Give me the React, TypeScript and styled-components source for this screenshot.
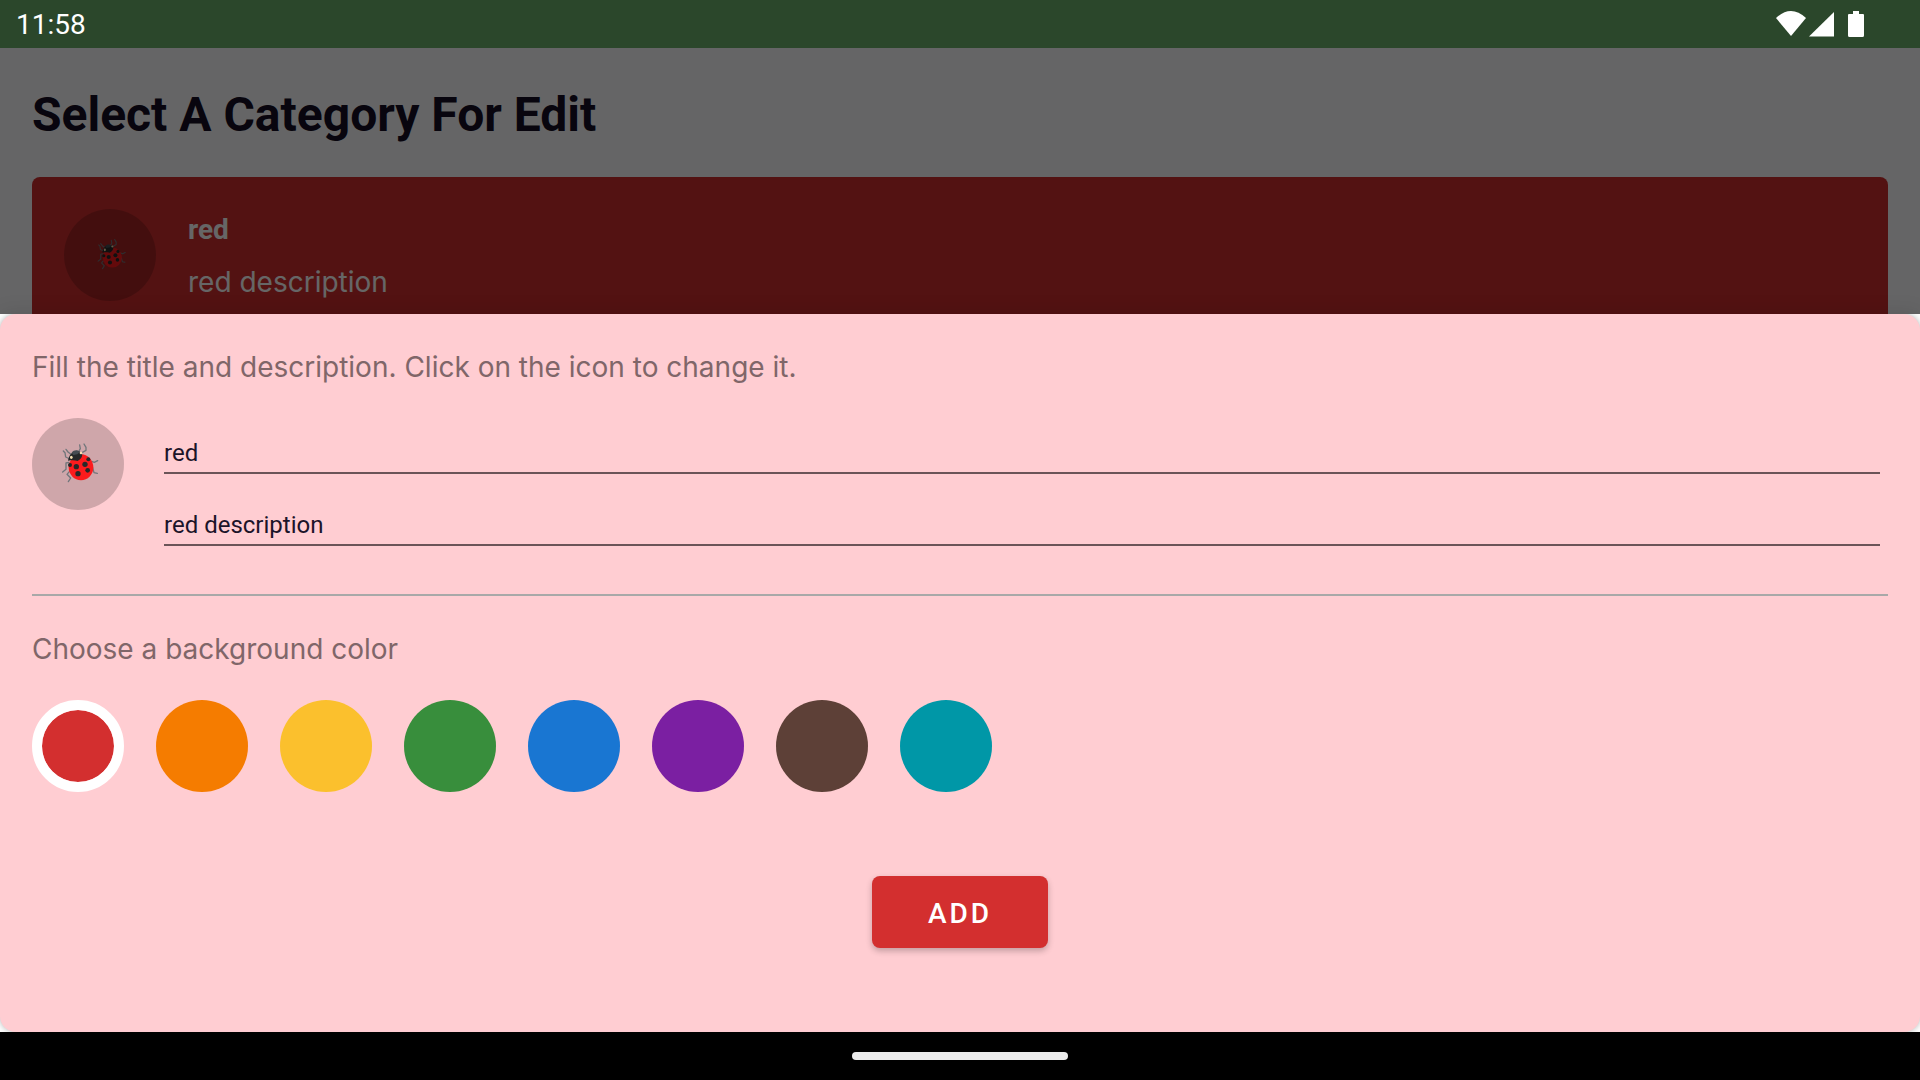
import React, { useState } from "react";
import styled, { createGlobalStyle } from "styled-components";

const GlobalStyle = createGlobalStyle`
  *, *::before, *::after { box-sizing: border-box; }
  body { margin: 0; background: #000; font-family: Roboto, sans-serif; }
`;

const Screen = styled.div`
  display: flex;
  flex-direction: column;
  height: 100vh;
`;

const StatusBar = styled.header`
  flex: none;
  display: flex;
  align-items: center;
  justify-content: space-between;
  height: 48px;
  padding: 2px 52px 0 16px;
  background: #2b472b;
  color: #fff;
  font-size: 28px;
  line-height: 40px;
`;

const StatusIcons = styled.svg`
  width: 92px;
  height: 28px;
  fill: #fff;
`;

const Backdrop = styled.main`
  position: relative;
  flex: 1 1 0;
  min-height: 0;
  overflow: hidden;
  padding: 32px;
  background: #fcfcff;

  &::after {
    content: "";
    position: absolute;
    inset: 0;
    background: rgba(0, 0, 0, 0.6);
  }
`;

const Title = styled.h1`
  margin: 0 0 27px;
  color: #140d24;
  font-size: 48px;
  font-weight: 700;
  line-height: 70px;
`;

const CategoryCard = styled.article`
  display: flex;
  gap: 32px;
  padding: 32px;
  border-radius: 8px;
  background: #cf2e2e;
  color: #fff;
`;

const CategoryName = styled.h2`
  margin: 0;
  font-size: 28px;
  font-weight: 700;
  line-height: 42px;
`;

const CategoryText = styled.p`
  margin: 10px 0 0;
  font-family: Inter, sans-serif;
  font-size: 28px;
  line-height: 42px;
`;

const IconDisc = styled.span`
  flex: none;
  display: flex;
  align-items: center;
  justify-content: center;
  width: 92px;
  height: 92px;
  border-radius: 50%;
  background: rgba(0, 0, 0, 0.19);
`;

const IconButton = styled.button`
  flex: none;
  padding: 0;
  border: 0;
  border-radius: 50%;
  background: none;
  cursor: pointer;
`;

const SheetArea = styled.section`
  position: relative;
  flex: none;
  background: #fff;
  box-shadow: 0 0 20px rgba(0, 0, 0, 0.12);
`;

const Sheet = styled.form`
  padding: 32px 32px 84px;
  border-radius: 16px;
  background: #ffcdd2;
  box-shadow: 0 0 6px rgba(0, 0, 0, 0.3);
`;

const SheetClip = styled.div`
  overflow: hidden;
`;

const Caption = styled.p`
  margin: 0;
  color: #806669;
  font-family: Inter, sans-serif;
  font-size: 28px;
  line-height: 42px;
`;

const EditRow = styled.div`
  display: flex;
  align-items: flex-start;
  gap: 40px;
  margin-top: 30px;
  padding-right: 8px;
`;

const Fields = styled.div`
  flex: 1;
  display: grid;
  gap: 16px;
`;

const TextField = styled.input`
  width: 100%;
  height: 56px;
  padding: 16px 0 0;
  border: 0;
  border-bottom: 2px solid #6b5458;
  border-radius: 0;
  outline: 0;
  background: transparent;
  color: #1c1429;
  font-family: Roboto, sans-serif;
  font-size: 24px;
`;

const Divider = styled.hr`
  height: 2px;
  margin: 48px 0 32px;
  border: 0;
  background: #a8a8a8;
`;

const Palette = styled.fieldset`
  display: block;
  min-width: 0;
  margin: 0;
  padding: 0;
  border: 0;
`;

const PaletteLegend = styled.legend`
  padding: 0;
  color: #806669;
  font-family: Inter, sans-serif;
  font-size: 28px;
  line-height: 42px;
`;

const Swatches = styled.div`
  display: flex;
  flex-wrap: wrap;
  gap: 32px;
  margin-top: 30px;
`;

const Swatch = styled.input<{ $color: string }>`
  appearance: none;
  width: 92px;
  height: 92px;
  margin: 0;
  border-radius: 50%;
  background: ${(p) => p.$color};
  cursor: pointer;

  &:checked {
    border: 10px solid #fff;
    background-clip: padding-box;
  }
`;

const AddButton = styled.button`
  display: block;
  width: 176px;
  height: 72px;
  margin: 84px auto 0;
  padding: 2px 0 0;
  border: 0;
  border-radius: 8px;
  background: #d32f2f;
  box-shadow: 0 3px 6px rgba(0, 0, 0, 0.24);
  color: #fff;
  font-family: Roboto, sans-serif;
  font-size: 28px;
  font-weight: 500;
  letter-spacing: 3px;
  cursor: pointer;
`;

const NavBar = styled.footer`
  flex: none;
  display: flex;
  align-items: center;
  justify-content: center;
  height: 48px;
  background: #000;
`;

const HomeHandle = styled.span`
  width: 216px;
  height: 8px;
  border-radius: 4px;
  background: #ececec;
`;

function Ladybug({ size }: { size: number }) {
  return (
    <svg width={size} height={size} viewBox="18 36 132 132" aria-hidden="true">
      <g fill="none" stroke="#71767b" strokeWidth="4" strokeLinecap="round" strokeLinejoin="round">
        <path d="M60 87 L47 81 L45 68 L40 63 M62 72 L54 66 L48 58" />
        <path d="M85 66 L91 56 L89 45 M96 68 L108 61 L108 52 L102 42" />
        <path d="M57 97 L48 99 L48 118 L38 126 M58 125 L51 133 L62 144 L55 155" />
        <path d="M125 94 L133 97 L143 92 M128 113 L132 128 L142 130" />
      </g>
      <ellipse cx="93" cy="112" rx="37" ry="39" fill="#fb1b1d" />
      <path d="M54 92 C57 76 66 64 80 63 C92 63 99 70 96 79 C94 86 89 90 83 93 C73 90 64 91 54 92 Z" fill="#262829" />
      <path d="M65 68 C72 59 83 59 90 66 L82 73 L70 75 Z" fill="#454c52" />
      <g fill="#262829">
        <circle cx="60" cy="105" r="6" />
        <circle cx="79" cy="110" r="8" />
        <circle cx="105" cy="103" r="8" />
        <circle cx="115" cy="88" r="6" />
        <circle cx="84" cy="131" r="8" />
        <circle cx="113" cy="121" r="7" />
      </g>
      <g fill="#f7dfb0">
        <ellipse cx="64" cy="82" rx="4" ry="5" />
        <ellipse cx="93" cy="69" rx="4" ry="4" />
      </g>
    </svg>
  );
}

const COLORS = [
  { name: "Red", value: "#d32f2f" },
  { name: "Orange", value: "#f57c00" },
  { name: "Yellow", value: "#fbc02d" },
  { name: "Green", value: "#388e3c" },
  { name: "Blue", value: "#1976d2" },
  { name: "Purple", value: "#7b1fa2" },
  { name: "Brown", value: "#5d4037" },
  { name: "Teal", value: "#0097a7" },
];

export default function App() {
  const [title, setTitle] = useState("red");
  const [description, setDescription] = useState("red description");
  const [color, setColor] = useState(COLORS[0].value);

  return (
    <Screen>
      <GlobalStyle />
      <StatusBar>
        <time>11:58</time>
        <StatusIcons viewBox="0 0 92 28" aria-hidden="true">
          <path d="M0 7 Q15 -7 30 7 L15 25 Z" />
          <path d="M58 1 V25.5 H33 Z" />
          <path d="M77 0 H83 V3 H87 Q88 3 88 4 V24.5 Q88 26 86.5 26 H73.5 Q72 26 72 24.5 V4 Q72 3 73 3 H77 Z" />
        </StatusIcons>
      </StatusBar>
      <Backdrop>
        <Title>Select A Category For Edit</Title>
        <CategoryCard>
          <IconDisc>
            <Ladybug size={34} />
          </IconDisc>
          <div>
            <CategoryName>red</CategoryName>
            <CategoryText>red description</CategoryText>
          </div>
        </CategoryCard>
      </Backdrop>
      <SheetArea>
        <SheetClip>
          <Sheet onSubmit={(e) => e.preventDefault()}>
            <Caption>Fill the title and description. Click on the icon to change it.</Caption>
            <EditRow>
              <IconButton type="button" aria-label="Change icon">
                <IconDisc>
                  <Ladybug size={44} />
                </IconDisc>
              </IconButton>
              <Fields>
                <TextField aria-label="Title" value={title} onChange={(e) => setTitle(e.target.value)} />
                <TextField
                  aria-label="Description"
                  value={description}
                  onChange={(e) => setDescription(e.target.value)}
                />
              </Fields>
            </EditRow>
            <Divider />
            <Palette>
              <PaletteLegend>Choose a background color</PaletteLegend>
              <Swatches>
                {COLORS.map((c) => (
                  <Swatch
                    key={c.name}
                    type="radio"
                    name="color"
                    aria-label={c.name}
                    $color={c.value}
                    checked={color === c.value}
                    onChange={() => setColor(c.value)}
                  />
                ))}
              </Swatches>
            </Palette>
            <AddButton type="submit">ADD</AddButton>
          </Sheet>
        </SheetClip>
      </SheetArea>
      <NavBar>
        <HomeHandle />
      </NavBar>
    </Screen>
  );
}
